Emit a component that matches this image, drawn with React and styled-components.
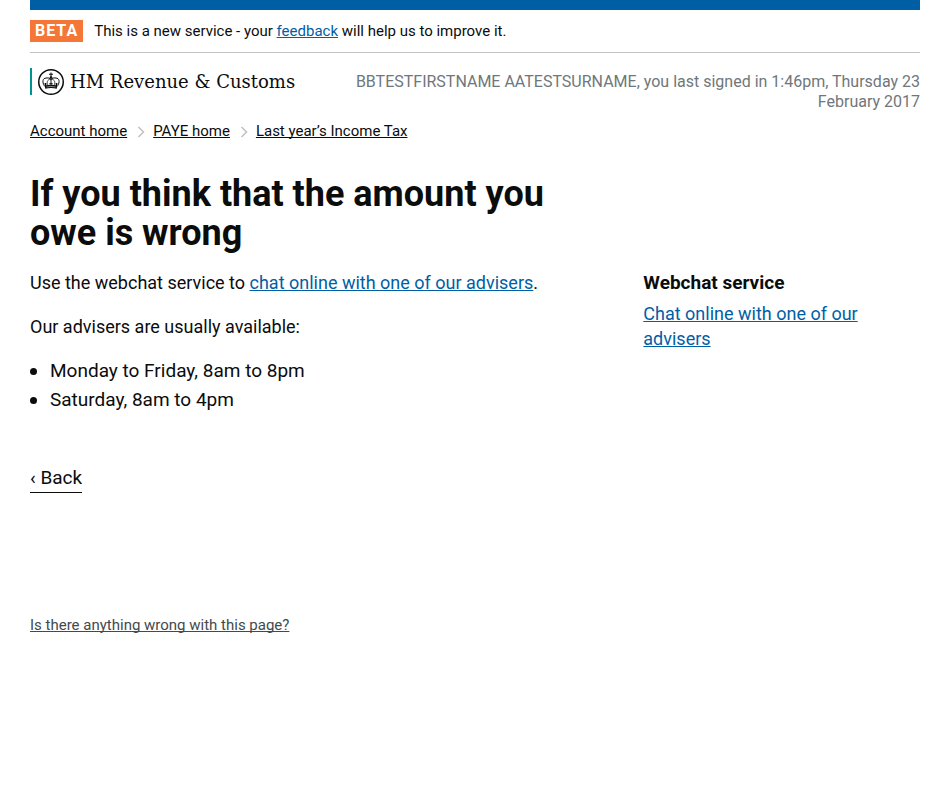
import React from "react";
import styled, { createGlobalStyle } from "styled-components";

const GlobalStyle = createGlobalStyle`
  *, *::before, *::after { box-sizing: border-box; }
  body {
    margin: 0;
    background: #fff;
    color: #0b0c0c;
    font-family: Roboto, "Noto Sans", sans-serif;
    font-size: 19px;
    line-height: 25px;
  }
  h1, h2, p, ul, ol { margin: 0; padding: 0; }
`;

const tones = { link: "#005ea5", text: "#0b0c0c", muted: "#434a4d" };

const Page = styled.div`
  max-width: 1020px;
  margin: 0 auto;
  padding: 0 30px;
`;

const BlueBar = styled.div`
  height: 10px;
  background: #005ea5;
`;

const Link = styled.a`
  color: ${({ $tone = "link" }) => tones[$tone]};
  text-decoration: underline;
  text-decoration-thickness: 1px;
  text-underline-offset: 1px;
  text-decoration-skip-ink: none;
`;

const PhaseBanner = styled.div`
  display: flex;
  align-items: center;
  gap: 11px;
  padding: 10px 0;
  border-bottom: 1px solid #bfc1c3;
  font-size: 15px;
  line-height: 22px;
`;

const PhaseTag = styled.strong`
  padding: 0 5px;
  background: #f47738;
  color: #fff;
  font-size: 16px;
  font-weight: 700;
  letter-spacing: 1px;
`;

const ServiceInfo = styled.header`
  display: flex;
  justify-content: space-between;
  gap: 30px;
  padding-top: 15px;
`;

const Organisation = styled.div`
  display: flex;
  align-items: center;
  flex: none;
  gap: 6px;
  height: 27px;
  padding-left: 6px;
  border-left: 2px solid #009390;
  font-family: "DejaVu Serif", serif;
  font-size: 18px;
`;

const SignedIn = styled.p`
  max-width: 580px;
  padding-top: 4px;
  color: #6f777b;
  font-size: 16px;
  line-height: 20px;
  text-align: right;
`;

const Crumbs = styled.ol`
  display: flex;
  flex-wrap: wrap;
  padding-top: 9px;
  list-style: none;
  font-size: 15px;
  line-height: 20px;
`;

const Crumb = styled.li`
  display: flex;
  align-items: center;
`;

const Chevron = styled.svg`
  margin: 2px 8px 0 10px;
`;

const Columns = styled.main`
  display: grid;
  grid-template-columns: 2fr 1fr;
  margin-right: -30px;
  padding-top: 34px;

  > * { padding-right: 30px; }
`;

const Title = styled.h1`
  grid-column: 1 / 2;
  font-size: 36px;
  line-height: 39px;
  font-weight: 700;
`;

const Article = styled.div`
  display: flex;
  grid-row: 2;
  flex-direction: column;
  align-items: flex-start;
  gap: 19px;
  padding-top: 17px;
`;

const Paragraph = styled.p`
  font-size: 18px;
`;

const Hours = styled.ul`
  display: grid;
  gap: 4px;
  padding-left: 20px;
  list-style: none;
`;

const Hour = styled.li`
  display: flex;
  align-items: center;
  margin-left: -20px;

  &::before {
    content: "";
    width: 7px;
    height: 7px;
    margin: 1px 13px 0 0;
    border-radius: 50%;
    background: #0b0c0c;
  }
`;

const BackLink = styled.a`
  margin-top: 34px;
  padding-bottom: 2px;
  border-bottom: 1px solid #0b0c0c;
  color: #0b0c0c;
  text-decoration: none;
`;

const Sidebar = styled.aside`
  grid-row: 2;
  padding-top: 17px;
`;

const SidebarTitle = styled.h2`
  margin-bottom: 6px;
  font-size: 19px;
  line-height: 25px;
`;

const Help = styled.footer`
  padding: 122px 0 30px;
  font-size: 15px;
  line-height: 20px;
`;

const Crest = () => (
  <svg width="26" height="26" viewBox="0 0 52 52" aria-hidden="true">
    <circle cx="26" cy="26" r="24.5" fill="#fff" stroke="#0b0c0c" strokeWidth="3" />
    <g fill="none" stroke="#0b0c0c" strokeWidth="2">
      <path d="M14 35C9 30 8 20 14 18.500C20 17 24 18 26 21C28 18 32 17 38 18.500C44 20 43 30 38 35" />
      <path d="M20 33C17 27 18 21 26 20C34 21 35 27 32 33" strokeWidth="1.500" />
      <path d="M26 7V16M22 10.500H30M26 20V33" />
      <path d="M15 28V34M37 28V34M12.500 30H17.500M34.500 30H39.500M22.500 29.500H29.500" />
    </g>
    <circle cx="26" cy="17" r="2.5" fill="#0b0c0c" />
    <path d="M13.500 33Q26 29.500 38.500 33L37.500 39.500Q26 36.500 14.500 39.500Z" fill="#0b0c0c" />
    <path d="M17 36Q26 33.500 35 36" fill="none" stroke="#fff" strokeWidth="1" />
  </svg>
);

const crumbs = ["Account home", "PAYE home", "Last year’s Income Tax"];

export default function App() {
  return (
    <>
      <GlobalStyle />
      <Page>
        <BlueBar />
        <PhaseBanner>
          <PhaseTag>BETA</PhaseTag>
          <p>
            This is a new service - your <Link href="#feedback">feedback</Link> will help us to
            improve it.
          </p>
        </PhaseBanner>
        <ServiceInfo>
          <Organisation>
            <Crest />
            <span>HM Revenue &amp; Customs</span>
          </Organisation>
          <SignedIn>
            BBTESTFIRSTNAME AATESTSURNAME, you last signed in 1:46pm, Thursday 23 February 2017
          </SignedIn>
        </ServiceInfo>
        <nav aria-label="Breadcrumb">
          <Crumbs>
            {crumbs.map((label, index) => (
              <Crumb key={label}>
                {index > 0 && (
                  <Chevron width="8" height="12" viewBox="0 0 8 12" aria-hidden="true">
                    <path d="M1.500 1L6.500 6L1.500 11" fill="none" stroke="#bfc1c3" strokeWidth="1.500" />
                  </Chevron>
                )}
                <Link href="#" $tone="text">{label}</Link>
              </Crumb>
            ))}
          </Crumbs>
        </nav>
        <Columns>
          <Title>If you think that the amount you owe is wrong</Title>
          <Article>
            <Paragraph>
              Use the webchat service to{" "}
              <Link href="#chat">chat online with one of our advisers</Link>.
            </Paragraph>
            <Paragraph>Our advisers are usually available:</Paragraph>
            <Hours>
              <Hour>Monday to Friday, 8am to 8pm</Hour>
              <Hour>Saturday, 8am to 4pm</Hour>
            </Hours>
            <BackLink href="#back">‹ Back</BackLink>
          </Article>
          <Sidebar>
            <SidebarTitle>Webchat service</SidebarTitle>
            <Paragraph>
              <Link href="#chat">Chat online with one of our advisers</Link>
            </Paragraph>
          </Sidebar>
        </Columns>
        <Help>
          <Link href="#help" $tone="muted">Is there anything wrong with this page?</Link>
        </Help>
      </Page>
    </>
  );
}
